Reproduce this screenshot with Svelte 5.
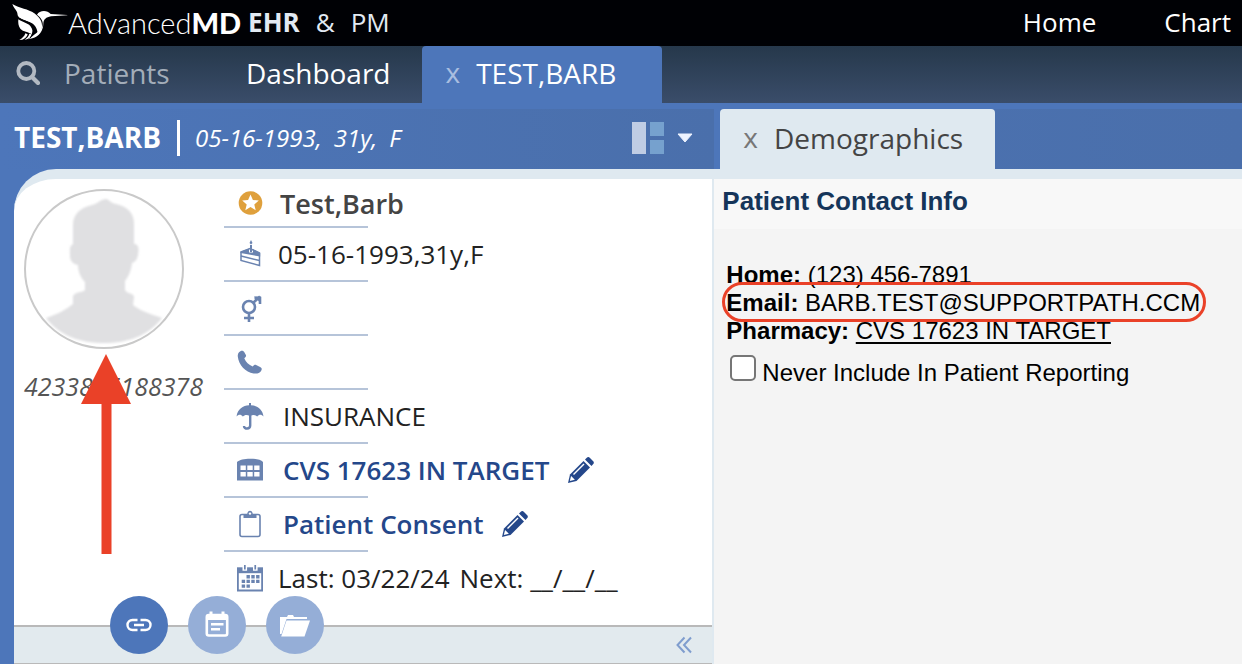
<script>
  const rows = [
    { icon: 'star', text: 'Test,Barb', kind: 'name' },
    { icon: 'cake', text: '05-16-1993,31y,F' },
    { icon: 'gender' },
    { icon: 'phone' },
    { icon: 'umbrella', text: 'INSURANCE', kind: 'wide' },
    { icon: 'building', text: 'CVS 17623 IN TARGET', kind: 'link' },
    { icon: 'clipboard', text: 'Patient Consent', kind: 'link' },
    { icon: 'calendar', text: 'Last: 03/22/24', next: 'Next: __/__/__' }
  ];

  let search = $state('');
  let excluded = $state(false);
</script>

{#snippet rowIcon(name)}
  <svg class="icon" viewBox="0 0 28 28" aria-hidden="true">
    {#if name === 'star'}
      <circle cx="14.5" cy="14" r="11.8" fill="#dfa03c" />
      <path d="M14.5 5.500l2.400 5.500 5.900.5-4.500 3.900 1.400 5.900-5.200-3.200-5.200 3.200 1.400-5.900-4.500-3.900 5.900-.5z" fill="#fff" />
    {:else if name === 'cake'}
      <path d="M5 12l9-3.500L23.500 13v12.500L5 20.500z" fill="#fff" stroke="#6a83b0" stroke-width="1.5" />
      <path d="M4.500 11.700L13 8.500v4h4V9l7.200 4v3.500L4.500 13z" fill="#6a83b0" />
      <path d="M5 16l18.500 4.500" stroke="#6a83b0" stroke-width="1.5" />
      <path d="M14 5h2v7h-2z" fill="#6a83b0" />
      <path d="M15 0l1.500 3L15 4.500 13.500 3z" fill="#6a83b0" />
    {:else if name === 'gender'}
      <g fill="none" stroke="#6a83b0" stroke-width="2.600">
        <circle cx="13" cy="13" r="6" />
        <path d="M13 19v9M8 24h10M17.500 8.500L24 2.500M18.500 4H24v6" />
      </g>
      <path d="M18 2.500h7v7z" fill="#6a83b0" />
    {:else if name === 'phone'}
      <path d="M3 4.200C4.600 2.300 7 2 8.200 4l1.700 3c.5 1.200-.1 2.100-1.600 3.200 1.500 3.800 4.500 6.700 8.400 8.300 1.200-1.500 2.200-2.200 3.400-1.600l4 2c2 1.100 2.100 2.500.8 4.300-1.400 2-4 2.800-7.300 2.200C9.500 24 2.600 16.800 1.800 8.400 1.600 6.600 2 5.300 3 4.200z" fill="#6a83b0" />
    {:else if name === 'umbrella'}
      <path d="M.5 14.500C1.500 7 7 3.600 13 3.300V1h2v2.300C21 3.600 26.500 7 27.500 14.500c-2-2.200-4.500-2.200-6.300 0-1.900-1.900-4.500-2.200-7.200-.3-2.700-1.900-5.300-1.600-7.200.3-1.800-2.200-4.300-2.200-6.300 0z" fill="#6a83b0" />
      <path d="M14.200 13v10.500c0 4-6.200 4-6.200.5" fill="none" stroke="#6a83b0" stroke-width="2.400" />
    {:else if name === 'building'}
      <path d="M1 24.500V6C5 1.500 23 1.500 27 6v18.500z" fill="#6a83b0" />
      <path d="M4.500 9.500h5.300V14H4.500zM11.300 9.500h5.400V14h-5.400zM18.200 9.500h5.300V14h-5.300zM4.500 16h5.300v4.500H4.500zM11.300 16h5.400v4.500h-5.400zM18.200 16h5.300v4.500h-5.300z" fill="#fff" />
    {:else if name === 'clipboard'}
      <rect x="4" y="4.500" width="20" height="22" rx="2" fill="#fff" stroke="#6a83b0" stroke-width="1.600" />
      <path d="M7.500 8V5.500c0-1 .5-1.500 1.500-1.500h2.200c.3-4.500 5.300-4.500 5.600 0H19c1 0 1.500.5 1.500 1.500V8z" fill="#6a83b0" />
      <circle cx="14" cy="3.600" r="1.200" fill="#fff" />
    {:else}
      <path d="M1.900 4.500h24.200v22H1.900z" fill="#fff" stroke="#6a83b0" stroke-width="1.800" />
      <path d="M1 3.600h26v5.600H1z" fill="#6a83b0" />
      <path d="M6.500 0h4.600v6.800H6.500zM17 0h4.600v6.800H17z" fill="#fff" />
      <path d="M8 1h1.700v4.600H8zM18.400 1h1.700v4.600h-1.700z" fill="#6a83b0" />
      <path d="M10.500 11h3.400v3.400h-3.400zM15.300 11h3.400v3.400h-3.400zM20.100 11h3.400v3.400h-3.400zM5.700 15.700h3.400v3.400H5.700zM10.500 15.700h3.400v3.400h-3.400zM15.300 15.700h3.400v3.400h-3.400zM20.100 15.700h3.400v3.400h-3.400zM5.700 20.400h3.400v3.400H5.700zM10.500 20.400h3.400v3.400h-3.400z" fill="#6a83b0" />
    {/if}
  </svg>
{/snippet}

<div class="app">
  <header class="topbar">
    <svg class="bird" viewBox="36 14 168 114" aria-hidden="true">
      <!-- wing, second feather, then head with beak and tail -->
      <path d="M37 17c22 13 48 15 66 28 15 11 25 25 23 42-1 10-6 17-13 22 0-14-5-26-17-34-15-9-34-9-42-22-2-4-1-7-3-12-4-8-11-14-14-24z" fill="#fff" />
      <path d="M55 63c12 9 27 10 36 20 7 9 8 16 4 25-8-8-26-7-34-17-6-8-7-18-6-28z" fill="#fff" />
      <path d="M111 49c7-13 30-15 41-2l50 3v1l-49 3c-15 3-22 9-23 22-1 22-12 37-33 44l-12 3c16-14 35-24 42-38 5-14-3-27-16-36z" fill="#fff" />
      <path d="M58 125c10-6 16-12 18-20l7 3c-2 8-8 13-16 16zM74 124c8-6 12-11 14-18l7 2c-2 8-7 13-14 15z" fill="#fff" />
      <path d="M58 60c17 9 34 11 41 26 5 11-1 23-9 34" fill="none" stroke="#000105" stroke-width="3" />
    </svg>
    <span class="logo">Advanced<b>MD</b></span>
    <span class="product"><b>EHR</b><span>&amp;</span><span>PM</span></span>
    <nav class="topnav">
      <a href="#home">Home</a>
      <a href="#chart">Chart</a>
    </nav>
  </header>

  <div class="tabbar">
    <label class="search">
      <svg viewBox="0 0 24 24" aria-hidden="true">
        <circle cx="10.300" cy="10" r="8" fill="none" stroke="#b2b9c2" stroke-width="3.800" />
        <path d="M16 16l6 6" stroke="#b2b9c2" stroke-width="4.200" stroke-linecap="round" />
      </svg>
      <input type="text" placeholder="Patients" aria-label="Patients" bind:value={search} />
    </label>
    <button class="dashboard">Dashboard</button>
    <div class="tab">
      <button class="close" aria-label="Close patient">x</button>
      <button>TEST,BARB</button>
    </div>
  </div>

  <div class="chartbar">
    <div class="patient">
      <strong>TEST,BARB</strong>
      <p><span>05-16-1993,</span><span>31y,</span><span>F</span></p>
      <button class="layout" aria-label="Choose layout">
        <svg viewBox="0 0 62 32" aria-hidden="true">
          <path d="M0 0h14v32H0z" fill="#c0cde4" />
          <path d="M18 0h14v14H18zM18 18h14v14H18z" fill="#76a1ce" />
          <path d="M46 12h14l-7 8z" fill="#edf3ff" stroke="#edf3ff" stroke-linejoin="round" />
        </svg>
      </button>
    </div>
    <div class="subtab">
      <button class="close" aria-label="Close Demographics">x</button>
      <button>Demographics</button>
    </div>
  </div>

  <main>
    <section class="card">
      <div class="card-body">
        <div class="identity">
          <svg class="avatar" viewBox="0 0 160 160" role="img" aria-label="Patient photo">
            <defs>
              <filter id="soft"><feGaussianBlur stdDeviation="0.9" /></filter>
            </defs>
            <circle cx="80" cy="80" r="79" fill="#fff" stroke="#c9c9c9" stroke-width="2" />
            <path
              d="M82 10c3 0 4 4 10 5 12 3 18 9 18 20v20c5 0 5 5 4 11-1 5-3 7-6 8-1 9-4 14-7 18v9c2 4 9 3 9 7l-1 8c7 6 18 9 29 13-14 18-34 25-58 25s-44-7-58-25c12-4 21-9 27-14v-8c3-5 9-3 12-6v-8c-4-4-7-10-7-17-5-1-8-4-8-9 0-6-1-10 3-12V36c0-11 7-17 19-20 7-2 9-6 14-6z"
              fill="#e0e0e2" filter="url(#soft)" />
          </svg>
          <span class="chart-no">4233875188378</span>
          <svg class="arrow" viewBox="0 0 50 200" aria-hidden="true">
            <path d="M25 0l25 50H30.500v150h-10V50H0z" fill="#ea4128" />
          </svg>
        </div>

        <ul class="facts">
          {#each rows as row}
            <li class={row.kind}>
              {@render rowIcon(row.icon)}
              {#if row.kind === 'link'}
                <a href="#{row.icon}">{row.text}</a>
                <button class="edit" aria-label="Edit {row.text}">
                  <svg viewBox="0 0 26 26" aria-hidden="true">
                    <path d="M0 26l2-8.500L15.500 4l6.500 6.500L8.500 24z" fill="#24478a" />
                    <path d="M1.800 24l1.300-5 3.800 3.800z" fill="#fff" />
                    <path d="M5.500 17.500L16 7" stroke="#fff" stroke-width="1.400" />
                    <path d="M17 2.500l1.800-1.800c1-1 2.200-.8 3.200.2l3 3c1 1 1.200 2.200.2 3.200L23.500 9z" fill="#24478a" />
                  </svg>
                </button>
              {:else if row.text}
                <span>{row.text}</span>
                {#if row.next}<span class="next">{row.next}</span>{/if}
              {/if}
            </li>
          {/each}
        </ul>
      </div>

      <footer>
        <div class="actions">
          <button class="active" aria-label="Links">
            <svg viewBox="0 0 30 30" aria-hidden="true">
              <path d="M13.500 10H8.500a5 5 0 0 0 0 10h5M16.500 10h5a5 5 0 0 1 0 10h-5M10 15h10" fill="none" stroke="#fff" stroke-width="2.400" />
            </svg>
          </button>
          <button aria-label="Notes">
            <svg viewBox="0 0 30 30" aria-hidden="true">
              <rect x="4.800" y="5" width="20.400" height="20.500" rx="2" fill="none" stroke="#fff" stroke-width="2.600" />
              <path d="M4 5h22v5H4zM7.500 1.500h3V6h-3zM19.500 1.500h3V6h-3zM9 13h12.500v2.600H9zM9 18h9v2.600H9z" fill="#fff" />
            </svg>
          </button>
          <button aria-label="Documents">
            <svg viewBox="0 0 30 30" aria-hidden="true">
              <path d="M0 7h7l1-2h5l1 2h13v2H6.500L1.500 24H0z" fill="#fff" />
              <path d="M6.500 10.500H30L24.500 26.500H1.200z" fill="#fff" />
            </svg>
          </button>
        </div>
        <button class="collapse" aria-label="Collapse panel">
          <svg viewBox="0 0 16 18" aria-hidden="true">
            <path d="M8.500 1.500L1.500 9l7 7.500M15 1.500L8 9l7 7.500" fill="none" stroke="#7f9dce" stroke-width="2" />
          </svg>
        </button>
      </footer>
    </section>

    <section class="demographics">
      <h2>Patient Contact Info</h2>
      <div class="contact">
        <p><b>Home:</b> (123) 456-7891</p>
        <p class="email"><b>Email:</b> BARB.TEST@SUPPORTPATH.CCM</p>
        <p><b>Pharmacy:</b> <a href="#pharmacy">CVS 17623 IN TARGET</a></p>
        <label><input type="checkbox" bind:checked={excluded} />Never Include In Patient Reporting</label>
      </div>
    </section>
  </main>
</div>

<style>
  :global(body) {
    background: #4d76ba;
  }

  .app {
    display: flex;
    flex-direction: column;
    min-height: 100vh;
    overflow: hidden;
    font-family: 'Open Sans', 'Noto Sans', sans-serif;
    font-size: 26px;
    color: #222;
  }

  button {
    padding: 0;
    border: 0;
    background: none;
    font: inherit;
    color: inherit;
    cursor: pointer;
  }

  svg {
    display: block;
    flex-shrink: 0;
  }

  ul,
  p,
  h2 {
    margin: 0;
    padding: 0;
  }

  .topbar {
    display: flex;
    align-items: center;
    box-sizing: border-box;
    height: 46px;
    padding: 0 11px 2px 12px;
    background: #000105;
    color: #fff;
  }

  .bird {
    width: 56px;
    height: 38px;
  }

  .logo {
    font-family: Lato, sans-serif;
    font-weight: 300;
    font-size: 29px;
  }

  .logo b {
    font-weight: 900;
  }

  .product {
    display: flex;
    gap: 16px;
    margin-left: 7px;
    color: #e2eaf3;
  }

  .topnav {
    display: flex;
    gap: 68px;
    margin-left: auto;
  }

  .topnav a {
    color: #fff;
    text-decoration: none;
  }

  .tabbar {
    display: flex;
    height: 57px;
    background: linear-gradient(#26384b, #3a4d6a);
    font-size: 28px;
    color: #fff;
  }

  .search {
    display: flex;
    align-items: center;
    gap: 24px;
    padding: 0 0 3px 16px;
  }

  .search svg {
    width: 24px;
    height: 24px;
  }

  .search input {
    width: 182px;
    padding: 0;
    border: 0;
    outline: 0;
    background: none;
    font: inherit;
    color: #fff;
  }

  .search input::placeholder {
    color: #a3adb9;
    opacity: 1;
  }

  .dashboard {
    padding-bottom: 3px;
  }

  .tab,
  .subtab {
    display: flex;
    align-items: center;
    gap: 16px;
  }

  .tab {
    width: 216px;
    margin-left: 31px;
    padding: 0 0 3px 24px;
    border-radius: 4px 4px 0 0;
    background: #4d76ba;
  }

  .close {
    padding-bottom: 2px;
    color: #a9bee0;
  }

  .chartbar {
    display: flex;
    border-top: 6px solid #4d76ba;
    height: 60px;
    background: linear-gradient(90deg, #4d76ba, #4a6fab);
  }

  .patient {
    display: flex;
    align-items: center;
    box-sizing: border-box;
    width: 58%;
    padding: 0 20px 2px 14px;
    border-right: 6px solid #4d76ba;
    background: linear-gradient(90deg, #4d76ba, #4a6fab);
    color: #fff;
  }

  .patient strong {
    padding: 0 16px 2px 0;
    font-size: 28px;
  }

  .patient p {
    display: flex;
    gap: 12px;
    padding-left: 15px;
    border-left: 3px solid #fff;
    font-size: 24px;
    font-style: italic;
    line-height: 36px;
  }

  .layout {
    margin-left: auto;
  }

  .layout svg {
    width: 62px;
    height: 32px;
  }

  .subtab {
    width: 252px;
    padding: 0 0 2px 23px;
    border-radius: 4px 4px 0 0;
    box-sizing: content-box;
    background: #dfe9f0;
    font-size: 28px;
    color: #444;
  }

  .subtab .close {
    color: #777;
  }

  main {
    display: flex;
    flex: 1;
  }

  .card {
    display: flex;
    flex-direction: column;
    box-sizing: border-box;
    /* shares its right edge with the patient header above */
    width: calc(58% - 20px);
    margin-left: 14px;
    border-top: 10px solid #dfe9f0;
    border-right: 2px solid #dfe9f0;
    border-top-left-radius: 42px;
    background: #fff;
  }

  .card-body {
    display: flex;
    flex: 1;
    gap: 40px;
    padding-left: 10px;
  }

  .identity {
    position: relative;
    display: flex;
    flex-direction: column;
    gap: 20px;
    width: 160px;
    padding-top: 10px;
  }

  .avatar {
    width: 160px;
    height: 160px;
  }

  .chart-no {
    font-size: 25px;
    font-style: italic;
    color: #555;
  }

  .arrow {
    position: absolute;
    top: 175px;
    left: 57px;
    width: 50px;
    height: 200px;
  }

  .facts {
    display: flex;
    flex-direction: column;
    gap: 6px;
    padding-top: 1px;
    list-style: none;
  }

  .facts li {
    display: flex;
    align-items: center;
    gap: 14px;
    box-sizing: border-box;
    width: 144px;
    height: 48px;
    padding: 0 0 6px 12px;
    border-bottom: 2px solid #b6c4d9;
    white-space: nowrap;
  }

  .facts li:last-child {
    border-bottom-color: transparent;
  }

  .icon {
    width: 28px;
    height: 28px;
  }

  .facts .name {
    gap: 16px;
    padding-bottom: 0;
    font-weight: 600;
    font-size: 27px;
    color: #444;
  }

  .facts .wide,
  .facts .link {
    gap: 19px;
  }

  .facts a {
    font-weight: 600;
    color: #24478a;
    text-decoration: none;
  }

  .next {
    margin-left: -4px;
  }

  .edit svg {
    width: 26px;
    height: 26px;
  }

  footer {
    display: flex;
    align-items: center;
    justify-content: space-between;
    height: 36px;
    padding: 0 20px 0 96px;
    border-top: 2px solid #b9b9b9;
    border-bottom: 1px solid #b9b9b9;
    background: #e2eaee;
  }

  .actions {
    display: flex;
    gap: 20px;
    margin-top: -40px;
  }

  .actions button {
    display: grid;
    place-items: center;
    width: 58px;
    height: 58px;
    border-radius: 50%;
    background: #95aed7;
  }

  .actions .active {
    background: #4d76ba;
  }

  .actions svg {
    width: 30px;
    height: 30px;
  }

  .collapse svg {
    width: 16px;
    height: 18px;
  }

  .demographics {
    flex: 1;
    border-top: 10px solid #dfe9f0;
    background: #f4f4f4;
    font-family: 'Liberation Sans', Arial, sans-serif;
    font-size: 24px;
    line-height: 28px;
    color: #000;
  }

  h2 {
    padding: 0 8px 6px;
    background: #f8f8f8;
    font-size: 26px;
    line-height: 44px;
    color: #15355a;
  }

  .contact {
    padding: 32px 12px;
    white-space: nowrap;
  }

  .contact a {
    color: #000;
    text-underline-offset: 3px;
  }

  .email {
    position: relative;
  }

  .email::after {
    content: '';
    position: absolute;
    top: -7px;
    left: -4px;
    box-sizing: border-box;
    width: 484px;
    height: 40px;
    border: 3px solid #ea4128;
    border-radius: 20px;
  }

  .contact label {
    display: flex;
    gap: 6px;
    padding: 10px 4px;
    line-height: 36px;
  }

  .contact input {
    width: 26px;
    height: 26px;
    margin: 0;
    border: 2px solid #767676;
    border-radius: 5px;
    background: #fff;
    appearance: none;
  }

  .contact input:checked {
    background: #4d76ba;
  }
</style>
